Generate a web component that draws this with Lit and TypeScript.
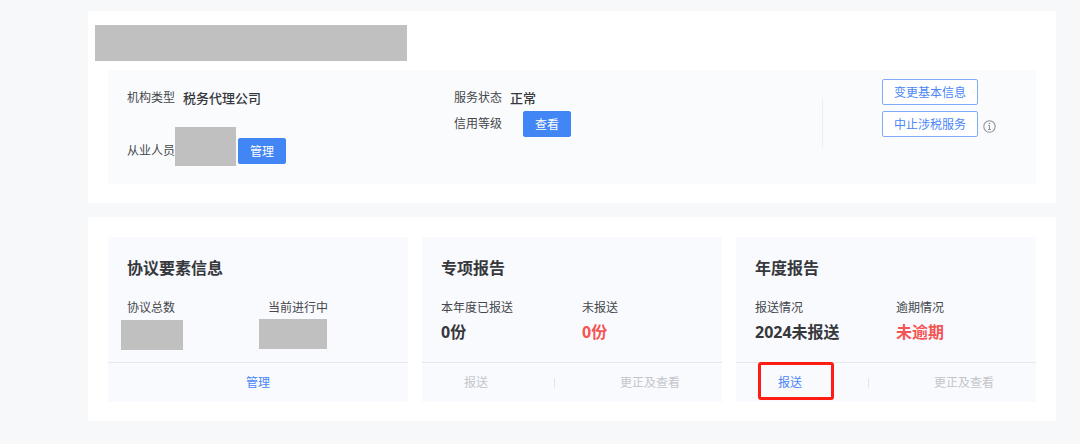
import { LitElement, html, css, nothing } from "lit";
import { customElement, property } from "lit/decorators.js";

const shared = css`
  :host {
    display: block;
    box-sizing: border-box;
  }
  *,
  *::before,
  *::after {
    box-sizing: border-box;
  }
  .mask {
    background: #c0c0c0;
  }
`;

interface Stat {
  label: string;
  value?: string;
  alert?: boolean;
  mask?: string;
}

interface Action {
  label: string;
  disabled?: boolean;
  marked?: boolean;
}

@customElement("report-card")
export class ReportCard extends LitElement {
  @property() heading = "";
  @property({ attribute: false }) stats: Stat[] = [];
  @property({ attribute: false }) actions: Action[] = [];

  static styles = [
    shared,
    css`
      :host {
        background: #f9fafe;
      }
      .body {
        padding: 19px 19px 12px;
      }
      .heading {
        margin: 0 0 18px;
        font-size: 16px;
        line-height: 24px;
        font-weight: 700;
        color: #36383c;
      }
      .stats {
        display: grid;
        grid-template-columns: 141fr 121fr;
        min-height: 52px;
        margin: 0;
      }
      .label {
        line-height: 20px;
      }
      .value {
        margin: 0;
        font-size: 16px;
        line-height: 28px;
        font-weight: 700;
        color: #36383c;
        white-space: nowrap;
      }
      .alert {
        color: #f45454;
      }
      .mask {
        height: 30px;
      }
      .total {
        width: 62px;
        margin: 2px 0 0 -6px;
      }
      .active {
        width: 68px;
        margin: 1px 0 0 -9px;
      }
      .actions {
        display: flex;
        align-items: center;
        justify-content: space-between;
        height: 40px;
        padding: 0 42px;
        border-top: 1px solid #e6e8ed;
      }
      .single {
        justify-content: center;
      }
      .action {
        position: relative;
        padding: 0;
        border: 0;
        background: none;
        font: inherit;
        line-height: 20px;
        color: #4a86f7;
        cursor: pointer;
      }
      .action:disabled {
        color: #c3c5ca;
        cursor: default;
      }
      .marked::after {
        content: "";
        position: absolute;
        inset: -11px -32px -7px -20px;
        border: 3px solid #ff1c12;
        border-radius: 3px;
        pointer-events: none;
      }
      .separator {
        width: 1px;
        height: 10px;
        background: #e3e5ea;
      }
    `,
  ];

  render() {
    return html`
      <div class="body">
        <h2 class="heading">${this.heading}</h2>
        <dl class="stats">
          ${this.stats.map(
            (s) => html`<div>
              <dt class="label">${s.label}</dt>
              ${s.mask
                ? html`<dd class="mask ${s.mask}"></dd>`
                : html`<dd class="value ${s.alert ? "alert" : ""}">${s.value}</dd>`}
            </div>`
          )}
        </dl>
      </div>
      <div class="actions ${this.actions.length === 1 ? "single" : ""}">
        ${this.actions.map(
          (a, i) => html`${i ? html`<span class="separator"></span>` : nothing}<button
              type="button"
              class="action ${a.marked ? "marked" : ""}"
              ?disabled=${a.disabled}
            >${a.label}</button>`
        )}
      </div>
    `;
  }
}

@customElement("app-root")
export class AppRoot extends LitElement {
  static styles = [
    shared,
    css`
      :host {
        min-height: 100vh;
        padding: 11px 24px 23px 88px;
        background: #f7f8fa;
        color: #45474b;
        font-family: "Noto Sans", "Noto Sans CJK SC", sans-serif;
        font-size: 12px;
      }
      .page {
        display: flex;
        flex-direction: column;
        gap: 14px;
      }
      .section {
        padding: 20px 20px 19px;
        background: #ffffff;
      }
      .profile {
        padding-top: 14px;
      }
      .name {
        width: 312px;
        height: 36px;
        margin: 0 0 9px -13px;
      }
      .panel {
        display: grid;
        grid-template-columns: 327fr 368fr 195fr;
        min-height: 114px;
        padding: 0 19px;
        background: #fafbfd;
      }
      .column {
        padding-top: 18px;
      }
      .row {
        display: flex;
        align-items: center;
        gap: 8px;
        line-height: 20px;
        white-space: nowrap;
      }
      .strong {
        font-size: 13px;
        font-weight: 500;
        color: #36383c;
      }
      .staff {
        align-items: flex-end;
        gap: 0;
        margin-top: 19px;
      }
      .inline {
        display: flex;
        align-items: center;
        margin-bottom: 2px;
        line-height: 26px;
      }
      .people {
        width: 61px;
        height: 39px;
        margin-right: 2px;
      }
      .credit {
        gap: 21px;
        margin-top: 3px;
      }
      .button {
        height: 26px;
        padding: 1px 11px 0;
        border: 1px solid #4285f5;
        border-radius: 2px;
        background: #4285f5;
        color: #ffffff;
        font: inherit;
        line-height: 23px;
        cursor: pointer;
      }
      .outline {
        border-color: #7facfa;
        background: #ffffff;
        color: #4a86f7;
      }
      .side {
        display: flex;
        gap: 59px;
      }
      .rule {
        width: 1px;
        height: 49px;
        margin-top: 29px;
        background: #eceef2;
      }
      .commands {
        display: flex;
        flex-direction: column;
        gap: 6px;
        padding-top: 9px;
      }
      .command {
        gap: 5px;
      }
      .info {
        display: block;
        width: 13px;
        height: 13px;
        margin-top: 4px;
      }
      .cards {
        display: grid;
        grid-template-columns: repeat(3, 1fr);
        gap: 14px;
      }
    `,
  ];

  render() {
    return html`
      <main class="page">
        <section class="section profile">
          <div class="mask name"></div>
          <div class="panel">
            <div class="column">
              <div class="row"><span>机构类型</span><span class="strong">税务代理公司</span></div>
              <div class="row staff">
                <span class="inline">从业人员</span>
                <span class="mask people"></span>
                <span class="inline"><button type="button" class="button">管理</button></span>
              </div>
            </div>
            <div class="column">
              <div class="row"><span>服务状态</span><span class="strong">正常</span></div>
              <div class="row credit">
                <span>信用等级</span><button type="button" class="button">查看</button>
              </div>
            </div>
            <div class="side">
              <span class="rule"></span>
              <div class="commands">
                <div class="row command"><button type="button" class="button outline">变更基本信息</button></div>
                <div class="row command">
                  <button type="button" class="button outline">中止涉税服务</button>
                  <svg class="info" viewBox="0 0 13 13" fill="none" stroke="#929498">
                    <circle cx="6.5" cy="6.5" r="5.7" stroke-width="1.1" />
                    <path d="M5.3 5.5h1.2v3.8M5 9.5h3" />
                    <circle cx="6.4" cy="3.6" r="0.8" fill="#929498" stroke="none" />
                  </svg>
                </div>
              </div>
            </div>
          </div>
        </section>
        <section class="section cards">
          <report-card
            heading="协议要素信息"
            .stats=${[
              { label: "协议总数", mask: "total" },
              { label: "当前进行中", mask: "active" },
            ]}
            .actions=${[{ label: "管理" }]}
          ></report-card>
          <report-card
            heading="专项报告"
            .stats=${[
              { label: "本年度已报送", value: "0份" },
              { label: "未报送", value: "0份", alert: true },
            ]}
            .actions=${[
              { label: "报送", disabled: true },
              { label: "更正及查看", disabled: true },
            ]}
          ></report-card>
          <report-card
            heading="年度报告"
            .stats=${[
              { label: "报送情况", value: "2024未报送" },
              { label: "逾期情况", value: "未逾期", alert: true },
            ]}
            .actions=${[
              { label: "报送", marked: true },
              { label: "更正及查看", disabled: true },
            ]}
          ></report-card>
        </section>
      </main>
    `;
  }
}
